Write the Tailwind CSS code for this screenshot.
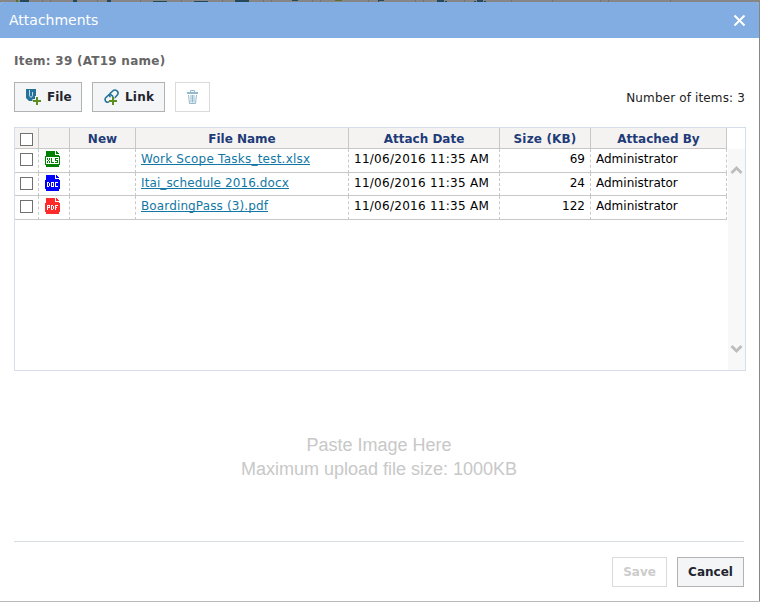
<!DOCTYPE html>
<html lang="en">
<head>
<meta charset="utf-8">
<title>Attachments</title>
<script src="https://cdn.jsdelivr.net/npm/@tailwindcss/browser@4"></script>
</head>
<body class="w-[760px] h-[602px] overflow-hidden bg-[#868686] font-['DejaVu_Sans',sans-serif] text-[12px] leading-4 text-black">
<div class="h-[2px]">
<svg class="block" width="760" height="2" shape-rendering="crispEdges"><path d="M42 0V2M50 0V2M97 0V2M140 0V2M181 0V2M222 0V2M263 0V2M271 0V2M312 0V2M320 0V2M368 0V2M415 0V2M423 0V2M464 0V2M511 0V2M552 0V2M600 0V2M608 0V2M670 0V2" stroke="#6e7276"/><path d="M20 0h9v2h-9zM73 0h4v2h-4zM107 0h4v2h-4zM153 1h14v1h-14zM194 1h14v1h-14zM235 0h14v2h-14zM292 0h6v1h-6zM379 0h5v1h-5v1h-1v-2zM437 0h7v2h-7zM445 1h2v1h-2zM477 0h6v2h-6zM474 1h2v1h-2zM484 1h2v1h-2z" fill="#24485c"/><path d="M16 0h2v2h-2zM335 0h7v1h-7z" fill="#5a702c"/></svg>
</div>
<main class="w-[759px] h-[599px] rounded-t-[3px] bg-white overflow-hidden flex flex-col">
<header class="h-9 shrink-0 bg-[#81ade2] flex items-center justify-between pl-[9px] pr-[13px]">
<h1 class="text-[14px] text-white">Attachments</h1>
<svg width="13" height="13" viewBox="0 0 13 13" fill="none" stroke="#fff" stroke-width="2"><path d="M1.5 1.5l10 10M11.5 1.5l-10 10"/></svg>
</header>
<div class="pl-[14px] pr-[13px]">
<h2 class="mt-[15px] h-4 font-bold tracking-[0.25px] text-[#666]">Item: 39 (AT19 name)</h2>
<div class="mt-[13px] h-[30px] flex font-bold text-[#1f2530]">
<button class="w-[68px] border border-[#b2b2b2] bg-[#f4f5f7] flex items-center pl-[11px]">
<svg width="16" height="16" viewBox="0 0 16 16"><path d="M0 0H10V12H3L0 9Z" fill="#24739a"/><path d="M3.500 1v5.500c0 2 3 2 3 0V3" fill="none" stroke="#f4f5f7" stroke-width=".8"/><path d="M11 7v9M6.500 12h9" stroke="#f4f5f7" stroke-width="4"/><path d="M11 8v8M7 12h8" stroke="#5b9021" stroke-width="2"/></svg>
<span class="ml-[5px]">File</span></button>
<button class="ml-[10px] w-[73px] border border-[#b2b2b2] bg-[#f4f5f7] flex items-center pl-[11px]">
<svg width="16" height="16" viewBox="0 0 16 16"><g fill="none" stroke="#24739a" stroke-width="1.600"><path d="M6.500 8c-1.500-1-1.500-2.500-.3-3.700l2.500-2.300c2.800-2.500 7 1 4.600 4l-2.500 2.700c-.8.800-1.500 1-2.300.8"/><path d="M5.500 12.500c-2.500 2-5.500-.5-4-3.500l2.500-2.500c2-1.800 5-.5 5 2"/></g><path d="M9 8v8M5 12h8" stroke="#f4f5f7" stroke-width="3"/><path d="M9 8v8M5 12h8" stroke="#5b9021" stroke-width="2"/></svg>
<span class="ml-[5px] tracking-[0.2px]">Link</span></button>
<button class="ml-[10px] w-[35px] border border-[#dadada] flex items-center justify-center">
<svg width="11" height="14" viewBox="0 0 11 14" fill="none" stroke="#92b9cd"><path d="M3.500 2V.5h4V2"/><path d="M0 3h11" stroke-width="2"/><path d="M1.500 5l1 8.500h6l1-8.500M4 5v7.500M5.500 5v7.500M7 5v7.500"/></svg></button>
<span class="ml-auto mr-px mt-2 font-normal tracking-[0.14px] text-[#222]">Number of items: 3</span>
</div>
<section class="mt-[15px] w-[732px] h-[244px] border border-[#d5deea] flex">
<table class="w-[712px] h-[92px] table-fixed border-separate border-spacing-0 [&_th]:border-r [&_th]:border-b [&_th]:border-[#c8c8c8] [&_th]:bg-[#f4f3f2] [&_th]:p-0 [&_th]:pt-0.5 [&_td]:p-0 [&_td]:border-b [&_td]:border-r [&_td]:border-b-[#c8c8c8] [&_td]:border-r-[#c8c8c8] [&_td]:[border-right-style:dashed] [&_td]:align-top whitespace-nowrap">
<colgroup><col class="w-[24px]"><col class="w-[31px]"><col class="w-[66px]"><col class="w-[213px]"><col class="w-[151px]"><col class="w-[91px]"><col class="w-[136px]"></colgroup>
<thead><tr class="h-[21px] text-[#1f3b78]"><th><i class="block ml-[5px] mt-px size-[13px] border border-[#707070] bg-white"></i></th><th></th><th>New</th><th>File Name</th><th>Attach Date</th><th class="tracking-[0.15px]">Size (KB)</th><th>Attached By</th></tr></thead>
<tbody>
<tr class="h-[24px]"><td><i class="block ml-[5px] mt-[4px] size-[13px] border border-[#707070]"></i></td>
<td><svg class="ml-[6px] mt-[2px]" width="15" height="16" shape-rendering="crispEdges"><path d="M1 0H10V4H14V16H1Z" fill="#008000"/><path d="M11 0h1v1h1v1h1v1h-3z" fill="#008000"/><path d="M0 5h15v9h-15z" fill="#008000"/><path d="M1 6h13v7h-13z" fill="#fff"/><path d="M2.500 7v2M4.500 7v2M3.500 9v1M2.500 10v2M4.500 10v2M6.500 7v5M6 11.500h3M10 7.500h3M10 9.500h3M10 11.500h3M10.500 7v3M12.500 9v3" stroke="#008000"/></svg></td><td></td>
<td><a class="block w-fit h-[14px] ml-[5px] mt-[2px] border-b border-[#1277a5] tracking-[0.23px] text-[#1277a5]">Work Scope Tasks_test.xlsx</a></td><td><span class="block ml-[5px] mt-[2px] tracking-[0.27px]">11/06/2016 11:35 AM</span></td><td class="text-right"><span class="block mr-[5px] mt-[2px]">69</span></td><td><span class="block ml-[5px] mt-[2px]">Administrator</span></td></tr>
<tr class="h-[23px]"><td><i class="block ml-[5px] mt-[4px] size-[13px] border border-[#707070]"></i></td>
<td><svg class="ml-[6px] mt-[2px]" width="15" height="16" shape-rendering="crispEdges"><path d="M1 0H10V4H14V16H1Z" fill="#00f"/><path d="M11 0h1v1h1v1h1v1h-3z" fill="#00f"/><path d="M0 5h15v9h-15z" fill="#00f"/><path d="M2 7.500h2M2 11.500h2M2.500 7v5M4.500 8v3M6 7.500h3M6 11.500h3M6.500 7v5M8.500 7v5M10 7.500h3M10 11.500h3M10.500 7v5" stroke="#fff"/></svg></td><td></td>
<td><a class="block w-fit h-[14px] ml-[5px] mt-[2px] border-b border-[#1277a5] tracking-[0.1px] text-[#1277a5]">Itai_schedule 2016.docx</a></td><td><span class="block ml-[5px] mt-[2px] tracking-[0.27px]">11/06/2016 11:35 AM</span></td><td class="text-right"><span class="block mr-[5px] mt-[2px]">24</span></td><td><span class="block ml-[5px] mt-[2px]">Administrator</span></td></tr>
<tr class="h-[24px]"><td><i class="block ml-[5px] mt-[4px] size-[13px] border border-[#707070]"></i></td>
<td><svg class="ml-[6px] mt-[2px]" width="15" height="16" shape-rendering="crispEdges"><path d="M1 0H10V4H14V16H1Z" fill="#ff2a2a"/><path d="M11 0h1v1h1v1h1v1h-3z" fill="#ff2a2a"/><path d="M0 5h15v9h-15z" fill="#ff2a2a"/><path d="M2 7.500h3M2 9.500h3M2.500 7v5M4.500 7v3M6 7.500h2M6 11.500h2M6.500 7v5M8.500 8v3M10 7.500h3M10 9.500h2M10.500 7v5" stroke="#fff"/></svg></td><td></td>
<td><a class="block w-fit h-[14px] ml-[5px] mt-[2px] border-b border-[#1277a5] tracking-[0.13px] text-[#1277a5]">BoardingPass (3).pdf</a></td><td><span class="block ml-[5px] mt-[2px] tracking-[0.27px]">11/06/2016 11:35 AM</span></td><td class="text-right"><span class="block mr-[5px] mt-[2px]">122</span></td><td><span class="block ml-[5px] mt-[2px]">Administrator</span></td></tr>
</tbody></table>
<div class="ml-[1px] mt-[21px] w-[17px] h-[221px] bg-[#f8f8f8] flex flex-col items-center justify-between pt-[15px] pb-[15px]">
<svg width="13" height="11" viewBox="0 0 13 11" fill="none" stroke="#bdbdbd" stroke-width="2.800"><path d="M1.500 9l5-5 5 5"/></svg>
<svg width="13" height="11" viewBox="0 0 13 11" fill="none" stroke="#bdbdbd" stroke-width="2.800"><path d="M1.500 2l5 5 5-5"/></svg>
</div>
</section>
<div class="w-[730px] h-[170px] pt-[62px] text-center font-['Liberation_Sans',sans-serif] text-[18px] leading-6 text-[#c8c8c8]"><p>Paste Image Here</p><p>Maximum upload file size: 1000KB</p></div>
<footer class="w-[730px] border-t border-[#d9dee6] pt-[15px] flex justify-end gap-[10px] font-bold">
<button class="w-[55px] h-[30px] border border-[#dadada] text-[#ccc]">Save</button>
<button class="w-[67px] h-[30px] border border-[#b2b2b2] bg-[#f4f5f7] text-[#1f2530]">Cancel</button>
</footer>
</div>
</main>
<div class="h-px bg-[#b9b9b9]"></div>
</body>
</html>
